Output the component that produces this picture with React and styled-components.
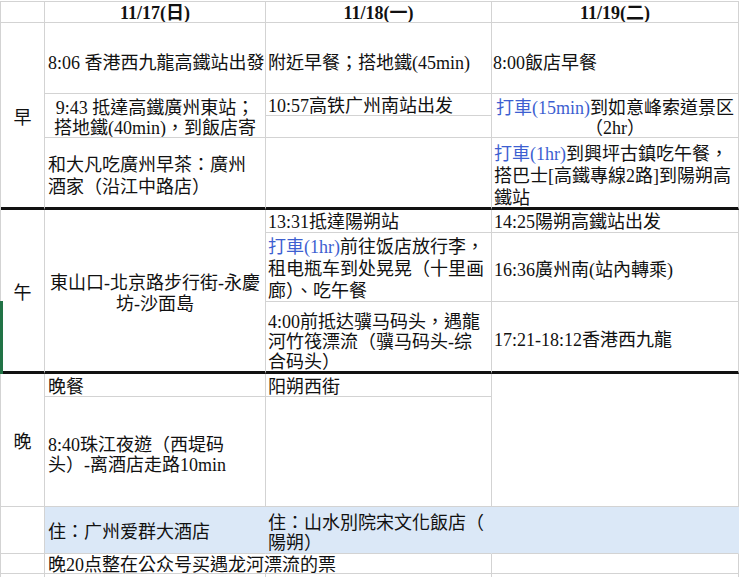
import React from "react";
import styled, { createGlobalStyle } from "styled-components";

const GlobalStyle = createGlobalStyle`
  html, body {
    margin: 0;
    padding: 0;
    background: #fff;
  }
  body {
    font-family: "Liberation Serif", "Noto Sans CJK TC", serif;
    color: #111;
  }
`;

const Sheet = styled.div`
  position: relative;
  display: grid;
  grid-template-columns: 44px 221px 226px 247px;
  grid-template-rows: 21px 71px 22px 22px 72px 23px 69px 72px 23px 110px 47px 20px 27px;
  width: max-content;
  margin-top: 1px;
  border-top: 1px solid #d3d3d3;
  border-left: 1px solid #d3d3d3;
`;

const Cell = styled.div`
  grid-column: ${(p) => p.$c};
  grid-row: ${(p) => p.$r};
  display: flex;
  flex-direction: column;
  justify-content: ${(p) => (p.$top ? "flex-start" : "center")};
  align-items: ${(p) => (p.$center ? "center" : "flex-start")};
  text-align: ${(p) => (p.$center ? "center" : "left")};
  padding: ${(p) => p.$pt ?? 6}px 3px 0 ${(p) => p.$pl ?? 3}px;
  overflow: hidden;
  white-space: nowrap;
  font-size: 18px;
  line-height: ${(p) => p.$lh ?? 22}px;
  font-weight: ${(p) => (p.$bold ? 700 : 400)};
  background: ${(p) => p.$fill || "transparent"};
  border-right: 1px solid ${(p) => (p.$fill ? "transparent" : "#d3d3d3")};
  border-bottom: ${(p) => (p.$thick ? "3px solid #111" : "1px solid #d3d3d3")};
`;

const Taxi = styled.span`
  color: #3d5fd1;
`;

const SelectionBar = styled.div`
  position: absolute;
  left: -1px;
  top: 299px;
  width: 3px;
  height: 73px;
  background: #217346;
`;

const BLUE = "#dbe8f7";

export default function App() {
  return (
    <>
      <GlobalStyle />
      <Sheet>
        {/* header */}
        <Cell $c="1 / 2" $r="1 / 2" />
        <Cell $c="2 / 3" $r="1 / 2" $center $bold $pt={2}>11/17(日)</Cell>
        <Cell $c="3 / 4" $r="1 / 2" $center $bold $pt={2}>11/18(一)</Cell>
        <Cell $c="4 / 5" $r="1 / 2" $center $bold $pt={2}>11/19(二)</Cell>

        {/* 早 */}
        <Cell $c="1 / 2" $r="2 / 6" $center $thick>早</Cell>
        <Cell $c="2 / 3" $r="2 / 3" $pt={10}>8:06 香港西九龍高鐵站出發</Cell>
        <Cell $c="2 / 3" $r="3 / 5" $center $top $pt={4} $lh={20}>
          <span>9:43 抵達高鐵廣州東站；</span>
          <span>搭地鐵(40min)，到飯店寄</span>
        </Cell>
        <Cell $c="2 / 3" $r="5 / 6" $thick>
          <span>和大凡吃廣州早茶：廣州</span>
          <span>酒家（沿江中路店）</span>
        </Cell>

        <Cell $c="3 / 4" $r="2 / 3" $pt={10} $pl={2}>附近早餐；搭地鐵(45min)</Cell>
        <Cell $c="3 / 4" $r="3 / 4" $top $pt={3} $lh={18} $pl={2}>10:57高铁广州南站出发</Cell>
        <Cell $c="3 / 4" $r="4 / 5" />
        <Cell $c="3 / 4" $r="5 / 6" $thick />

        <Cell $c="4 / 5" $r="2 / 3" $pt={10} $pl={1}>8:00飯店早餐</Cell>
        <Cell $c="4 / 5" $r="3 / 5" $center $top $pt={4} $lh={20}>
          <span><Taxi>打車(15min)</Taxi>到如意峰索道景区</span>
          <span>（2hr）</span>
        </Cell>
        <Cell $c="4 / 5" $r="5 / 6" $top $pt={5} $pl={2} $thick>
          <span><Taxi>打車(1hr)</Taxi>到興坪古鎮吃午餐，</span>
          <span>搭巴士[高鐵專線2路]到陽朔高</span>
          <span>鐵站</span>
        </Cell>

        {/* 午 */}
        <Cell $c="1 / 2" $r="6 / 9" $center $pt={5} $thick>午</Cell>
        <Cell $c="2 / 3" $r="6 / 9" $center $lh={21} $thick>
          <span>東山口-北京路步行街-永慶</span>
          <span>坊-沙面島</span>
        </Cell>

        <Cell $c="3 / 4" $r="6 / 7" $pt={2} $pl={2}>13:31抵達陽朔站</Cell>
        <Cell $c="3 / 4" $r="7 / 8" $top $pt={3} $pl={2}>
          <span><Taxi>打車(1hr)</Taxi>前往饭店放行李，</span>
          <span>租电瓶车到处晃晃（十里画</span>
          <span>廊）、吃午餐</span>
        </Cell>
        <Cell $c="3 / 4" $r="8 / 9" $top $pt={10} $lh={20} $pl={2} $thick>
          <span>4:00前抵达骥马码头，遇龍</span>
          <span>河竹筏漂流（骥马码头-综</span>
          <span>合码头）</span>
        </Cell>

        <Cell $c="4 / 5" $r="6 / 7" $pt={2} $pl={2}>14:25陽朔高鐵站出发</Cell>
        <Cell $c="4 / 5" $r="7 / 8" $pt={6} $pl={2}>16:36廣州南(站內轉乘)</Cell>
        <Cell $c="4 / 5" $r="8 / 9" $pt={7} $pl={2} $thick>17:21-18:12香港西九龍</Cell>

        {/* 晚 */}
        <Cell $c="1 / 2" $r="9 / 11" $center $pt={4}>晚</Cell>
        <Cell $c="2 / 3" $r="9 / 10" $pt={4}>晚餐</Cell>
        <Cell $c="2 / 3" $r="10 / 11" $pt={7} $lh={20}>
          <span>8:40珠江夜遊（西堤码</span>
          <span>头）-离酒店走路10min</span>
        </Cell>
        <Cell $c="3 / 4" $r="9 / 10" $pt={4} $pl={2}>阳朔西街</Cell>
        <Cell $c="3 / 4" $r="10 / 11" />
        <Cell $c="4 / 5" $r="9 / 11" />

        {/* 住 */}
        <Cell $c="1 / 2" $r="11 / 12" />
        <Cell $c="2 / 3" $r="11 / 12" $pt={4} $fill={BLUE}>住：广州爱群大酒店</Cell>
        <Cell $c="3 / 4" $r="11 / 12" $pt={6} $lh={20} $pl={2} $fill={BLUE}>
          <span>住：山水別院宋文化飯店（</span>
          <span>陽朔）</span>
        </Cell>
        <Cell $c="4 / 5" $r="11 / 12" $fill={BLUE} />

        {/* note */}
        <Cell $c="1 / 2" $r="12 / 13" />
        <Cell $c="2 / 4" $r="12 / 13" $pt={3}>晚20点整在公众号买遇龙河漂流的票</Cell>
        <Cell $c="4 / 5" $r="12 / 13" />

        <Cell $c="1 / 2" $r="13 / 14" />
        <Cell $c="2 / 3" $r="13 / 14" />
        <Cell $c="3 / 4" $r="13 / 14" />
        <Cell $c="4 / 5" $r="13 / 14" />

        <SelectionBar />
      </Sheet>
    </>
  );
}
